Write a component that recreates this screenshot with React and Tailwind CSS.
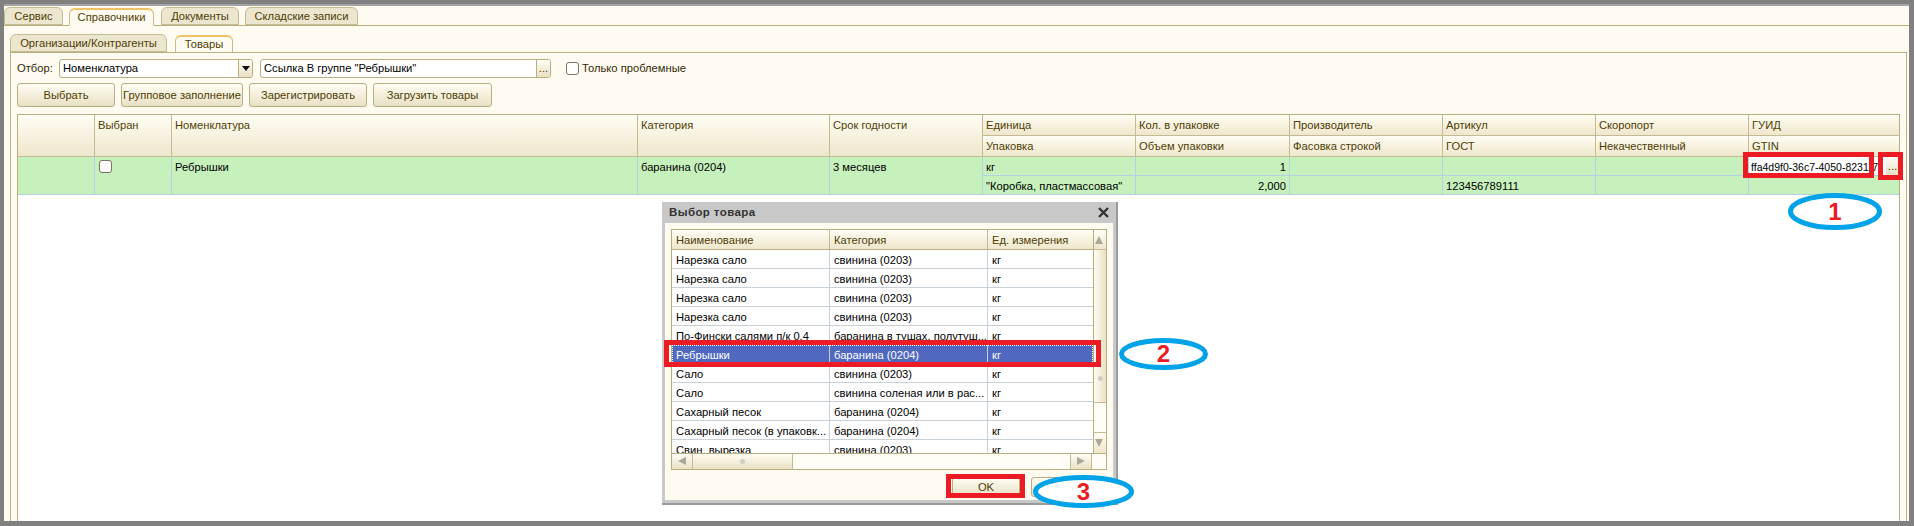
import React from "react";

const hdr = "bg-linear-to-b from-[#fffdf4] to-[#efe7cc] text-[#4f3d05]";
const btn = "flex items-center justify-center h-full rounded-[3px] border border-[#b8ae80] bg-linear-to-b from-[#fffdf4] to-[#e9e1c4] text-[#4f3d05] whitespace-nowrap";

function Tab({ w, active, children }) {
  return (
    <div
      className={`flex items-center justify-center h-full rounded-t-[6px] border border-[#c4bb94] ${active ? "-mb-px border-t-2 border-t-[#f0c264] bg-[#fffbf0] border-b-[#fffbf0]" : "bg-[#ece6cf]"} text-[#4f3d05]`}
      style={{ width: w }}
    >
      {children}
    </div>
  );
}

function HCell({ span, last, children }) {
  return (
    <div className={`${hdr} px-[3px] pt-[3px] border-b border-[#c4bb94] ${last ? "" : "border-r"} ${span ? "row-span-2" : ""}`}>
      {children}
    </div>
  );
}

function DCell({ span, last, right, children }) {
  return (
    <div className={`px-[3px] pt-[3px] border-b border-[#b5cfe4] ${last ? "" : "border-r"} ${span ? "row-span-2" : ""} ${right ? "text-right" : ""} bg-[#c6f0bc] text-black whitespace-nowrap overflow-hidden`}>
      {children}
    </div>
  );
}

const rows = [
  ["Нарезка сало", "свинина (0203)", "кг"],
  ["Нарезка сало", "свинина (0203)", "кг"],
  ["Нарезка сало", "свинина (0203)", "кг"],
  ["Нарезка сало", "свинина (0203)", "кг"],
  ["По-Фински салями п/к 0.4", "баранина в тушах, полутуш...", "кг"],
  ["Ребрышки", "баранина (0204)", "кг", true],
  ["Сало", "свинина (0203)", "кг"],
  ["Сало", "свинина соленая или в рас...", "кг"],
  ["Сахарный песок", "баранина (0204)", "кг"],
  ["Сахарный песок (в упаковк...", "баранина (0204)", "кг"],
  ["Свин. вырезка", "свинина (0203)", "кг"],
];

function Tri({ dir }) {
  const p = { up: "4,1 8,9 0,9", down: "0,1 8,1 4,9", left: "1,4 9,0 9,8", right: "9,4 1,0 1,8" }[dir];
  return (
    <svg width="10" height="10" viewBox="0 0 10 10"><polygon points={p} fill="#aaa89a" /></svg>
  );
}

function RedBox({ x, y, w, h }) {
  return <div className="absolute border-[5px] border-[#ed1c24]" style={{ left: x, top: y, width: w, height: h }} />;
}

function Callout({ x, y, w, h, n }) {
  return (
    <div className="absolute flex items-center justify-center" style={{ left: x, top: y, width: w, height: h }}>
      <svg className="absolute inset-0" width={w} height={h}>
        <ellipse cx={w / 2} cy={h / 2} rx={w / 2 - 2.5} ry={h / 2 - 2.5} fill="#fff" stroke="#00a2e8" strokeWidth="5" />
      </svg>
      <span className="relative text-[#ed1c24] font-bold text-[24px] leading-none">{n}</span>
    </div>
  );
}

export default function App() {
  return (
    <div className="relative w-[1914px] h-[526px] overflow-hidden bg-[#808080] pt-[4px] pb-[5px] pl-[4px] pr-[5px] font-['Liberation_Sans',sans-serif] text-[11.2px] leading-[15px]">
      <div className="flex flex-col h-full">
        <div className="h-[2px] bg-[#a3a3a3] shrink-0" />
        <div className="flex flex-col flex-1 min-h-0 bg-[#fffbf0]">
          {/* top tabs */}
          <div className="flex items-end h-[20px] pt-[1px] gap-[6px] border-b border-[#b8ae80] shrink-0">
            <Tab w={59}>Сервис</Tab>
            <div className="flex items-end h-full gap-[7px]">
              <Tab w={85} active>Справочники</Tab>
              <Tab w={78}>Документы</Tab>
            </div>
            <Tab w={113}>Складские записи</Tab>
          </div>
          {/* second level */}
          <div className="flex flex-col flex-1 min-h-0 pt-[8px] pl-[6px] pr-[2px]">
            <div className="flex items-end h-[18px] gap-[8px] shrink-0">
              <Tab w={157}>Организации/Контрагенты</Tab>
              <Tab w={58} active>Товары</Tab>
            </div>
            <div className="flex flex-col flex-1 min-h-0 border border-b-0 border-[#b8ae80] pt-[6px] pl-[6px] pr-[6px]">
              {/* filter */}
              <div className="flex items-center h-[19px] shrink-0 text-[#33290a]">
                <span className="w-[42px]">Отбор:</span>
                <div className="flex h-full w-[194px] rounded-[3px] border border-[#b8ae80] bg-white overflow-hidden">
                  <span className="flex-1 px-[3px] pt-[1px] text-black">Номенклатура</span>
                  <span className="flex items-center justify-center w-[14px] border-l border-[#b8ae80] bg-linear-to-b from-[#fffdf4] to-[#e9e1c4]">
                    <svg width="8" height="6" viewBox="0 0 8 6"><polygon points="0,0 8,0 4,5" fill="#111" /></svg>
                  </span>
                </div>
                <div className="flex h-full w-[291px] ml-[7px] rounded-[3px] border border-[#b8ae80] bg-white overflow-hidden">
                  <span className="flex-1 px-[3px] pt-[1px] text-black">Ссылка В группе "Ребрышки"</span>
                  <span className="flex items-center justify-center w-[14px] border-l border-[#b8ae80] bg-linear-to-b from-[#fffdf4] to-[#e9e1c4] text-[#4f3d05]">...</span>
                </div>
                <span className="w-[13px] h-[13px] ml-[15px] mr-[3px] rounded-[3px] border border-[#77745f] bg-white" />
                <span>Только проблемные</span>
              </div>
              {/* buttons */}
              <div className="flex items-center h-[24px] mt-[5px] gap-[6px] shrink-0">
                <div className={`${btn} w-[98px]`}>Выбрать</div>
                <div className={`${btn} w-[122px]`}>Групповое заполнение</div>
                <div className={`${btn} w-[118px]`}>Зарегистрировать</div>
                <div className={`${btn} w-[119px]`}>Загрузить товары</div>
              </div>
              {/* table */}
              <div className="flex-1 min-h-0 mt-[7px] bg-white border border-b-0 border-[#b8ae80]">
                <div className="grid grid-cols-[77px_77px_466px_192px_153px_153px_154px_153px_153px_153px_1fr] grid-rows-[21px_21px_19px_19px]">
                  <HCell span></HCell>
                  <HCell span>Выбран</HCell>
                  <HCell span>Номенклатура</HCell>
                  <HCell span>Категория</HCell>
                  <HCell span>Срок годности</HCell>
                  <HCell>Единица</HCell>
                  <HCell>Кол. в упаковке</HCell>
                  <HCell>Производитель</HCell>
                  <HCell>Артикул</HCell>
                  <HCell>Скоропорт</HCell>
                  <HCell last>ГУИД</HCell>
                  <HCell>Упаковка</HCell>
                  <HCell>Объем упаковки</HCell>
                  <HCell>Фасовка строкой</HCell>
                  <HCell>ГОСТ</HCell>
                  <HCell>Некачественный</HCell>
                  <HCell last>GTIN</HCell>

                  <DCell span></DCell>
                  <DCell span>
                    <span className="block w-[13px] h-[13px] ml-[1px] rounded-[3px] border border-[#77745f] bg-white" />
                  </DCell>
                  <DCell span>Ребрышки</DCell>
                  <DCell span>баранина (0204)</DCell>
                  <DCell span>3 месяцев</DCell>
                  <DCell>кг</DCell>
                  <DCell right>1</DCell>
                  <DCell></DCell>
                  <DCell></DCell>
                  <DCell></DCell>
                  <div className="flex bg-[#c6f0bc] border-b border-[#b5cfe4]">
                    <div className="w-[137px] bg-white text-black pl-[2px] pt-[3px] text-[10.5px] whitespace-nowrap">ffa4d9f0-36c7-4050-8231-7</div>
                    <div className="flex flex-1 justify-center items-center bg-linear-to-b from-[#fffdf4] to-[#e9e1c4] text-[#4f3d05]">...</div>
                  </div>
                  <DCell>"Коробка, пластмассовая"</DCell>
                  <DCell right>2,000</DCell>
                  <DCell></DCell>
                  <DCell>123456789111</DCell>
                  <DCell></DCell>
                  <DCell last></DCell>
                </div>
              </div>
            </div>
          </div>
        </div>
      </div>

      {/* dialog */}
      <div className="absolute left-[662px] top-[202px] w-[456px] h-[303px] flex flex-col bg-[#c8c8c8] border-r-2 border-b-2 border-[#9a9a9a] px-[3px] pb-[3px]">
        <div className="flex items-center justify-between h-[21px] shrink-0 pr-[4px] pl-[4px] font-bold text-[#333] text-[11.5px] tracking-[0.4px]">
          <span>Выбор товара</span>
          <svg width="11" height="11" viewBox="0 0 11 11"><path d="M1 1 L10 10 M10 1 L1 10" stroke="#333" strokeWidth="2.4" /></svg>
        </div>
        <div className="flex flex-col flex-1 min-h-0 bg-[#fffbf0] px-[6px] pt-[6px]">
          <div className="flex flex-col h-[241px] shrink-0 border border-[#b8ae80] bg-white">
            <div className="flex flex-1 min-h-0">
              <div className="flex flex-col w-[421px] overflow-hidden">
                <div className={`grid grid-cols-[158px_158px_1fr] h-[20px] shrink-0 border-b border-[#b8ae80] ${hdr}`}>
                  <div className="px-[4px] pt-[3px] border-r border-[#c4bb94]">Наименование</div>
                  <div className="px-[4px] pt-[3px] border-r border-[#c4bb94]">Категория</div>
                  <div className="px-[4px] pt-[3px]">Ед. измерения</div>
                </div>
                {rows.map((r, i) => (
                  <div
                    key={i}
                    className={`grid grid-cols-[158px_158px_1fr] h-[19px] shrink-0 border-b ${r[3] ? "bg-[#5068c0] text-white border-[#5068c0] outline-1 outline-dotted -outline-offset-1 outline-white" : "text-black border-[#c8d0d8]"}`}
                  >
                    <div className={`px-[4px] pt-[3px] whitespace-nowrap overflow-hidden border-r ${r[3] ? "border-[#c8d0e8]" : "border-[#c8d0d8]"}`}>{r[0]}</div>
                    <div className={`px-[4px] pt-[3px] whitespace-nowrap overflow-hidden border-r ${r[3] ? "border-[#c8d0e8]" : "border-[#c8d0d8]"}`}>{r[1]}</div>
                    <div className="px-[4px] pt-[3px]">{r[2]}</div>
                  </div>
                ))}
              </div>
              {/* vertical scrollbar */}
              <div className="flex flex-col flex-1 border-l border-[#b8ae80] bg-[#fffdf6]">
                <div className={`flex items-center justify-center h-[20px] shrink-0 border-b border-[#c4bb94] ${hdr}`}><Tri dir="up" /></div>
                <div className="flex items-center justify-center h-[153px] shrink-0 border-b border-[#c4bb94] bg-linear-to-r from-[#fffdf4] to-[#e9e1c4]">
                  <span className="w-[5px] h-[5px] rounded-full bg-[#cfcfc0] mt-[105px]" />
                </div>
                <div className="flex-1" />
                <div className={`flex items-center justify-center h-[21px] shrink-0 border-t border-[#c4bb94] ${hdr}`}><Tri dir="down" /></div>
              </div>
            </div>
            {/* horizontal scrollbar */}
            <div className="flex h-[16px] shrink-0 border-t border-[#b8ae80] bg-[#fffdf6]">
              <div className="flex items-center justify-center w-[21px] border-r border-[#c4bb94] bg-linear-to-b from-[#fffdf4] to-[#e9e1c4]"><Tri dir="left" /></div>
              <div className="flex items-center justify-center w-[100px] border-r border-[#c4bb94] bg-linear-to-b from-[#fffdf4] to-[#e9e1c4]">
                <span className="w-[5px] h-[5px] rounded-full bg-[#cfcfc0]" />
              </div>
              <div className="flex-1" />
              <div className="flex items-center justify-center w-[21px] border-l border-[#c4bb94] bg-linear-to-b from-[#fffdf4] to-[#e9e1c4]"><Tri dir="right" /></div>
              <div className="w-[15px] border-l border-[#c4bb94]" />
            </div>
          </div>
          <div className="flex justify-end gap-[11px] h-[20px] mt-[7px] shrink-0">
            <div className={`${btn} w-[68px]`}>OK</div>
            <div className={`${btn} w-[76px]`}></div>
          </div>
        </div>
      </div>

      {/* annotations */}
      <RedBox x={1743} y={152} w={131} h={26} />
      <RedBox x={1878} y={152} w={25} h={28} />
      <RedBox x={664} y={340} w={437} h={27} />
      <RedBox x={946} y={474} w={79} h={24} />
      <Callout x={1788} y={193} w={94} h={37} n="1" />
      <Callout x={1119} y={338} w={89} h={32} n="2" />
      <Callout x={1033} y={475} w={101} h={33} n="3" />
    </div>
  );
}
